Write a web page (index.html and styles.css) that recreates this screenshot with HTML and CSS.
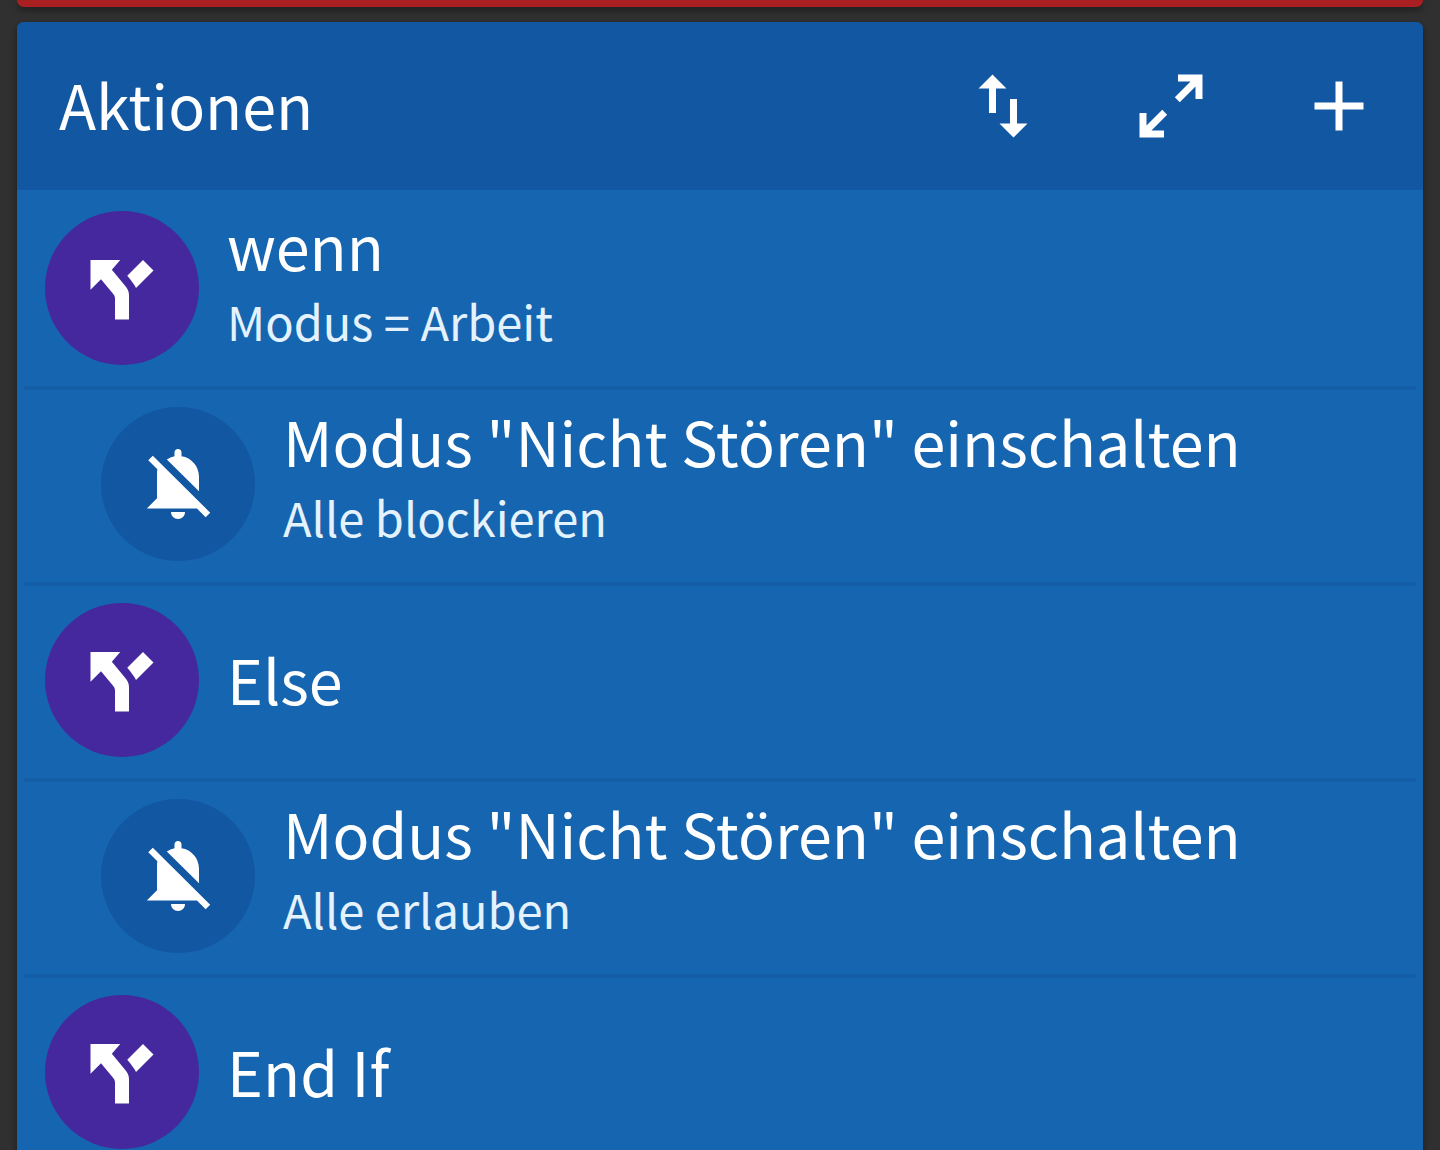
FILE: index.html
```
<!DOCTYPE html>
<html lang="de">
    <head>
        <meta charset="utf-8">
        <meta name="viewport" content="width=device-width, initial-scale=1">
        <title>Aktionen</title>
        <link rel="stylesheet" href="styles.css">
    </head>
    <body>
        <!-- icons used more than once -->
        <svg class="sprite" aria-hidden="true">
            <symbol id="fork" viewBox="0 0 24 24">
                <path d="M3 4V12.5L6 9.5L9.5 13.7C9.8 14 10 14.5 10 15V21H14V14C14 12.9 13.5 12.2 13 11.5L9.1 6.8L11.5 4H3ZM18 4L13.5 8.5C14.7 9.9 15.5 11 16 12L21 7L18 4Z"/>
            </symbol>
            <symbol id="bell-off" viewBox="0 0 24 24">
                <path d="M4.8 3.9L3.5 5.2L6.1 7.8C6 8.4 6 9 6 9.8V16.1L3.1 19H17.4L19.9 21.5L21.2 20.2Z"/>
                <path d="M8.8 5C9.5 4.6 10.2 4.3 11 4.1V3C11 2.4 11.4 2 12 2S13 2.4 13 3V4.1C15.9 4.5 18 7 18 10V14.1Z"/>
                <path d="M10 20H14C14 21.1 13.1 22 12 22S10 21.1 10 20Z"/>
            </symbol>
        </svg>

        <div class="card card-red"></div>

        <div class="card card-blue">
            <div class="header">
                <h1>Aktionen</h1>
                <button aria-label="Sortieren">
                    <svg class="icon" viewBox="0 0 24 24"><path d="M9 3L5 7H8V14H10V7H13L9 3ZM16 17V10H14V17H11L15 21L19 17H16Z"/></svg>
                </button>
                <button aria-label="Vergrößern">
                    <svg class="icon" viewBox="0 0 24 24"><path d="M10 21V19H6.41L10.91 14.5L9.5 13.09L5 17.59V14H3V21H10ZM14.5 10.91L19 6.41V10H21V3H14V5H17.59L13.09 9.5L14.5 10.91Z"/></svg>
                </button>
                <button aria-label="Hinzufügen">
                    <svg class="icon" viewBox="0 0 24 24"><path d="M19 13H13V19H11V13H5V11H11V5H13V11H19V13Z"/></svg>
                </button>
            </div>

            <ul class="list">
                <li class="row">
                    <div class="circle purple"><svg class="icon"><use href="#fork"/></svg></div>
                    <div class="text">
                        <div class="title">wenn</div>
                        <div class="sub">Modus = Arbeit</div>
                    </div>
                </li>
                <li class="row indent">
                    <div class="circle"><svg class="icon"><use href="#bell-off"/></svg></div>
                    <div class="text">
                        <div class="title">Modus "Nicht Stören" einschalten</div>
                        <div class="sub">Alle blockieren</div>
                    </div>
                </li>
                <li class="row">
                    <div class="circle purple"><svg class="icon"><use href="#fork"/></svg></div>
                    <div class="text">
                        <div class="title">Else</div>
                    </div>
                </li>
                <li class="row indent">
                    <div class="circle"><svg class="icon"><use href="#bell-off"/></svg></div>
                    <div class="text">
                        <div class="title">Modus "Nicht Stören" einschalten</div>
                        <div class="sub">Alle erlauben</div>
                    </div>
                </li>
                <li class="row">
                    <div class="circle purple"><svg class="icon"><use href="#fork"/></svg></div>
                    <div class="text">
                        <div class="title">End If</div>
                    </div>
                </li>
            </ul>
        </div>
    </body>
</html>
```
FILE: styles.css
```
*{
    box-sizing: border-box;
}
body{
    margin: 0;
    padding: 0 17px;
    background-color: #303030;
    color: #fff;
    font-family: "Noto Sans CJK SC", "Noto Sans", sans-serif;
}
.sprite{
    display: none;
}
.card{
    border-radius: 7px;
    overflow: hidden;
    box-shadow: 0 3px 7px rgba(0, 0, 0, 0.4);
}
.card-red{
    height: 7px;
    margin-bottom: 15px;
    border-radius: 0 0 7px 7px;
    background-color: #a91f22;
}
.card-blue{
    background-color: #1665b0;
}
.header{
    display: flex;
    align-items: center;
    height: 168px;
    padding-left: 42px;
    background-color: #1257a2;
}
h1{
    flex: 1;
    margin: 0;
    padding-bottom: 4px;
    font-size: 61px;
    font-weight: 400;
    line-height: 68px;
}
button{
    display: flex;
    align-items: center;
    justify-content: center;
    width: 168px;
    height: 168px;
    padding: 0;
    border: none;
    background-color: transparent;
    color: white;
}
.icon{
    width: 84px;
    height: 84px;
    fill: currentColor;
}
.list{
    margin: 0;
    padding: 0 7px;
    list-style: none;
}
.row{
    display: flex;
    align-items: center;
    gap: 28px;
    padding: 17px 21px 21px;
    border-top: 4px solid #145ea7;
}
.row:first-child{
    border-top-color: transparent;
}
.indent{
    padding-left: 77px;
}
.circle{
    display: flex;
    flex: none;
    align-items: center;
    justify-content: center;
    width: 154px;
    height: 154px;
    border-radius: 50%;
    background-color: #1257a2;
}
.purple{
    background-color: #45289e;
}
.text{
    padding-bottom: 2px;
}
.title{
    font-size: 61px;
    line-height: 68px;
}
.sub{
    font-size: 47px;
    line-height: 84px;
    color: #e3f2fd;
}
```
